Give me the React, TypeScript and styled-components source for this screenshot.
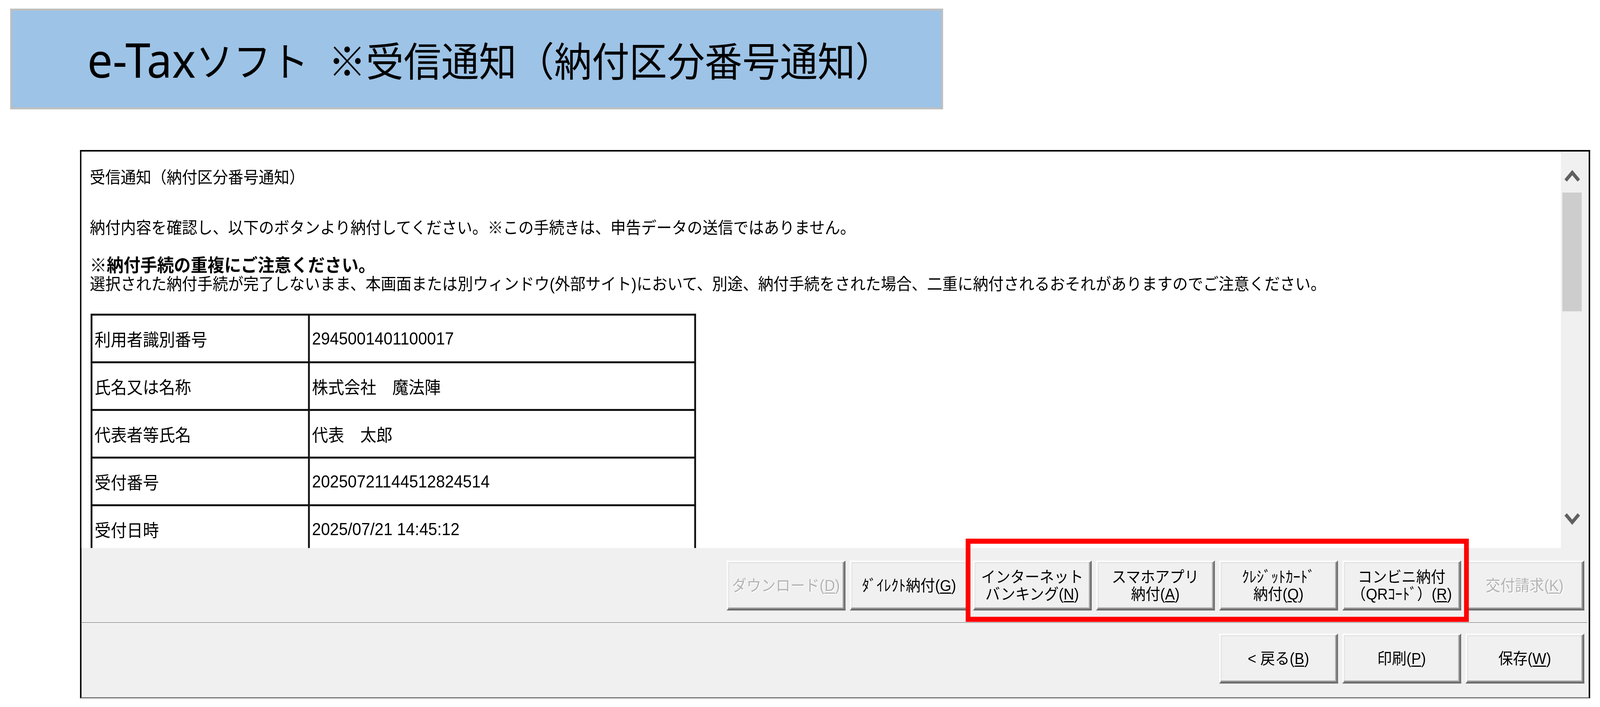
import React, { useEffect, useState } from 'react';
import styled, { createGlobalStyle } from 'styled-components';

// The screenshot is laid out on a 4379px-wide design; the page is squeezed
// horizontally to whatever width the browser actually gives us.
const DESIGN_WIDTH = 4379;

const GlobalStyle = createGlobalStyle`
  html, body {
    margin: 0;
    padding: 0;
    background: #ffffff;
    overflow: hidden;
  }
  body {
    font-family: "Liberation Sans", "Noto Sans CJK JP", sans-serif;
    color: #000;
  }
`;

const Page = styled.div`
  width: ${DESIGN_WIDTH}px;
  height: 1810px;
  box-sizing: border-box;
  padding: 22px 0 0 28px;
  overflow: hidden;
  transform-origin: 0 0;
`;

const Banner = styled.div`
  width: 2553px;
  height: 258px;
  box-sizing: border-box;
  border: 5px solid #bfbfbf;
  background: #9dc3e6;
  display: flex;
  align-items: center;
  padding-left: 206px;
  font-family: "Noto Sans CJK JP", sans-serif;
  font-size: 103px;
  white-space: nowrap;
`;

const BannerLatin = styled.span`
  font-family: "Noto Sans", "Open Sans", sans-serif;
  font-size: 123px;
`;

const BannerGap = styled.span`
  display: inline-block;
  width: 54px;
`;

const Window = styled.div`
  margin: 104px 0 0 191px;
  width: 4133px;
  height: 1404px;
  box-sizing: border-box;
  border: 4px solid #000;
  border-bottom: 3px solid #767676;
  background: #f0f0f0;
  display: flex;
  flex-direction: column;
`;

const ViewArea = styled.div`
  display: flex;
  height: 1015px;
  flex-shrink: 0;
`;

const ContentPane = styled.div`
  flex: 1;
  min-width: 0;
  background: #ffffff;
  overflow: hidden;
  box-sizing: border-box;
  padding: 43px 0 0 23px;
`;

const Para = styled.p<{ $gap?: number }>`
  margin: ${p => p.$gap ?? 0}px 0 0;
  font-size: 42px;
  line-height: 48px;
  white-space: nowrap;
`;

const Caution = styled.p`
  margin: 46px 0 0;
  font-size: 46px;
  line-height: 50px;
  font-weight: bold;
  white-space: nowrap;
`;

const InfoTable = styled.table`
  margin: 51px 0 0 2px;
  border-collapse: collapse;
  table-layout: fixed;
  font-size: 44px;
`;

const Cell = styled.td<{ $w: number }>`
  width: ${p => p.$w}px;
  height: 117px;
  border: 5px solid #111;
  padding: 0 0 0 6px;
  white-space: nowrap;
`;

const ScrollBar = styled.div`
  width: 76px;
  box-sizing: border-box;
  padding-right: 15px;
  display: flex;
  flex-direction: column;
  align-items: center;
  background: #f0f0f0;
`;

const ArrowBox = styled.div<{ $top: number }>`
  height: 105px;
  box-sizing: border-box;
  padding-top: ${p => p.$top}px;
  display: flex;
  justify-content: center;
`;

const Thumb = styled.div`
  width: 53px;
  height: 304px;
  background: #cdcdcd;
`;

const Track = styled.div`
  flex: 1;
`;

const Footer = styled.div`
  flex: 1;
  padding-top: 32px;
  display: flex;
  flex-direction: column;
`;

const ButtonRow = styled.div<{ $gap?: number }>`
  display: flex;
  justify-content: flex-end;
  gap: 12px;
  padding-right: 12px;
  margin-top: ${p => p.$gap ?? 0}px;
`;

const Separator = styled.div`
  margin: 30px 4px 0 0;
  border-top: 2px solid #a0a0a0;
  border-bottom: 2px solid #ffffff;
`;

const Highlight = styled.div`
  position: relative;
  display: flex;
  gap: 12px;

  &::after {
    content: '';
    position: absolute;
    top: -56px;
    bottom: -29px;
    left: -20px;
    right: -21px;
    border: 13px solid #ff0000;
    pointer-events: none;
    z-index: 2;
  }
`;

const Btn = styled.div<{ $off?: boolean }>`
  width: 325px;
  height: 128px;
  box-sizing: border-box;
  background: #f0f0f0;
  border-style: solid;
  border-width: 4px 5px 5px 4px;
  border-color: #fcfcfc #6f6f6f #6f6f6f #fcfcfc;
  box-shadow: inset -3px -3px 0 #a9a9a9, inset 3px 3px 0 #e3e3e3;
  font-family: "Liberation Sans", "Noto Sans CJK JP", sans-serif;
  font-size: 40px;
  line-height: 44px;
  color: ${p => (p.$off ? '#b4b4b4' : '#000')};
  text-shadow: ${p => (p.$off ? '2px 2px 0 #ffffff' : 'none')};
  display: flex;
  flex-direction: column;
  align-items: center;
  justify-content: center;
  white-space: nowrap;
`;

const Key = styled.span`
  text-decoration: underline;
  text-underline-offset: 4px;
  text-decoration-thickness: 3px;
`;

const Chevron = ({ down }: { down?: boolean }) => (
  <svg width="44" height="34" viewBox="0 0 44 34">
    <polyline
      points={down ? '4,5 22,25 40,5' : '4,29 22,9 40,29'}
      fill="none"
      stroke="#606060"
      strokeWidth="9"
    />
  </svg>
);

type Label = { lines: string[]; hotkey: string; off?: boolean };

const PayButton = ({ lines, hotkey, off }: Label) => {
  const last = lines.length - 1;
  return (
    <Btn $off={off}>
      {lines.map((line, i) => (
        <span key={i}>
          {line}
          {i === last && (
            <>
              (<Key>{hotkey}</Key>)
            </>
          )}
        </span>
      ))}
    </Btn>
  );
};

const rows: [string, string][] = [
  ['利用者識別番号', '2945001401100017'],
  ['氏名又は名称', '株式会社　魔法陣'],
  ['代表者等氏名', '代表　太郎'],
  ['受付番号', '20250721144512824514'],
  ['受付日時', '2025/07/21 14:45:12'],
];

const fitScale = () =>
  typeof window === 'undefined' ? 1 : Math.min(1, window.innerWidth / DESIGN_WIDTH);

export default function App() {
  const [scaleX, setScaleX] = useState(fitScale);

  useEffect(() => {
    const onResize = () => setScaleX(fitScale());
    window.addEventListener('resize', onResize);
    return () => window.removeEventListener('resize', onResize);
  }, []);

  return (
    <Page style={{ transform: `scaleX(${scaleX})` }}>
      <GlobalStyle />
      <Banner>
        <BannerLatin>e-Tax</BannerLatin>ソフト<BannerGap />※受信通知（納付区分番号通知）
      </Banner>

      <Window>
        <ViewArea>
          <ContentPane>
            <Para>受信通知（納付区分番号通知）</Para>
            <Para $gap={81}>
              納付内容を確認し、以下のボタンより納付してください。※この手続きは、申告データの送信ではありません。
            </Para>
            <Caution>※納付手続の重複にご注意ください。</Caution>
            <Para>
              選択された納付手続が完了しないまま、本画面または別ウィンドウ(外部サイト)において、別途、納付手続をされた場合、二重に納付されるおそれがありますのでご注意ください。
            </Para>
            <InfoTable>
              <tbody>
                {rows.map(([label, value]) => (
                  <tr key={label}>
                    <Cell $w={584}>{label}</Cell>
                    <Cell $w={1046}>{value}</Cell>
                  </tr>
                ))}
              </tbody>
            </InfoTable>
          </ContentPane>
          <ScrollBar>
            <ArrowBox $top={45}>
              <Chevron />
            </ArrowBox>
            <Thumb />
            <Track />
            <ArrowBox $top={14}>
              <Chevron down />
            </ArrowBox>
          </ScrollBar>
        </ViewArea>

        <Footer>
          <ButtonRow>
            <PayButton lines={['ダウンロード']} hotkey="D" off />
            <PayButton lines={['ﾀﾞｲﾚｸﾄ納付']} hotkey="G" />
            <Highlight>
              <PayButton lines={['インターネット', 'バンキング']} hotkey="N" />
              <PayButton lines={['スマホアプリ', '納付']} hotkey="A" />
              <PayButton lines={['ｸﾚｼﾞｯﾄｶｰﾄﾞ', '納付']} hotkey="Q" />
              <PayButton lines={['コンビニ納付', '（QRｺｰﾄﾞ）']} hotkey="R" />
            </Highlight>
            <PayButton lines={['交付請求']} hotkey="K" off />
          </ButtonRow>
          <Separator />
          <ButtonRow $gap={25}>
            <PayButton lines={['< 戻る']} hotkey="B" />
            <PayButton lines={['印刷']} hotkey="P" />
            <PayButton lines={['保存']} hotkey="W" />
          </ButtonRow>
        </Footer>
      </Window>
    </Page>
  );
}
